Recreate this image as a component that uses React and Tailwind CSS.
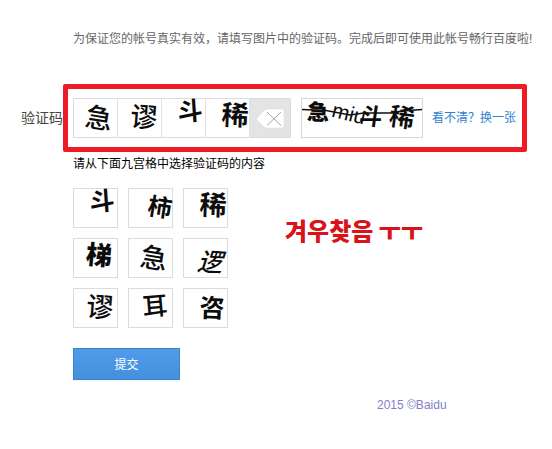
import { useState } from 'react'

const GLYPHS = {
    dou: { char: '斗', x: 28, y: 12, size: 25, rotate: -4, weight: 700 },
    shi: { char: '柿', x: 31, y: 18, size: 24, rotate: 9, weight: 700 },
    xi: { char: '稀', x: 29, y: 16, size: 27, rotate: 2, weight: 700 },
    ti: { char: '梯', x: 25, y: 16, size: 26, rotate: 5, weight: 900 },
    ji: { char: '急', x: 25, y: 19, size: 27, rotate: 9, weight: 500 },
    luo: { char: '逻', x: 26, y: 23, size: 25, rotate: 4, weight: 500, italic: true },
    miu: { char: '谬', x: 26, y: 18, size: 27, rotate: 4, weight: 500 },
    er: { char: '耳', x: 26, y: 17, size: 25, rotate: -5, weight: 500 },
    zi: { char: '咨', x: 28, y: 19, size: 25, rotate: 2, weight: 700 },
}

const GRID = ['dou', 'shi', 'xi', 'ti', 'ji', 'luo', 'miu', 'er', 'zi']

const CAPTCHA = [
    { char: '急', x: 16, y: 13, size: 22, rotate: 2, weight: 900 },
    { char: 'miu', x: 47, y: 14, size: 21, rotate: 14, weight: 400 },
    { char: '斗', x: 69, y: 17, size: 23, rotate: 8, weight: 700 },
    { char: '稀', x: 100, y: 18, size: 25, rotate: 8, weight: 700 },
]

function Glyph({ char, x, y, size, rotate, weight, italic }) {
    return (
        <text
            x={x}
            y={y}
            dy="0.37em"
            textAnchor="middle"
            fontSize={size}
            fontWeight={weight}
            fontStyle={italic ? 'italic' : 'normal'}
            transform={`rotate(${rotate} ${x} ${y})`}
            fill="#0c0c0c"
        >
            {char}
        </text>
    )
}

function Tile({ id }) {
    return (
        <svg className="block h-[38px] w-[43px] overflow-visible" viewBox="0 0 43 38">
            <Glyph {...GLYPHS[id]} />
        </svg>
    )
}

function CodeBox({ picked, onDelete }) {
    return (
        <div role="group" aria-labelledby="code-label" className="flex h-10 border border-[#dcdcdc]">
            {[0, 1, 2, 3].map((i) => (
                <div key={i} className="w-11 border-r border-[#e2e2e2]">
                    {picked[i] && <Tile id={picked[i]} />}
                </div>
            ))}
            <button type="button" aria-label="删除" onClick={onDelete} className="w-10 bg-[#e4e4e4]">
                <svg className="block h-[38px] w-10" viewBox="0 0 40 38">
                    <path d="M6 20 14 11.500Q15 10 17 10H32Q34 10 34 12V27Q34 29 32 29H17Q15 29 14 28Z" fill="#fff" stroke="#d8d8d8" strokeWidth="0.500" />
                    <path d="M17 13 31 26.500M31 13 17 26.500" stroke="#a3a3a3" fill="none" />
                </svg>
            </button>
        </div>
    )
}

export default function App() {
    const [picked, setPicked] = useState(['ji', 'miu', 'dou', 'xi'])

    const pick = (id) => setPicked((prev) => (prev.length < 4 ? [...prev, id] : prev))
    const removeLast = () => setPicked((prev) => prev.slice(0, -1))

    return (
        <main className="bg-white pt-[31px] pb-9 font-['Liberation_Sans','Noto_Sans_CJK_SC',sans-serif] text-xs leading-4">
            <form onSubmit={(e) => e.preventDefault()}>
                <p className="pl-[73px] whitespace-nowrap text-[#666]">
                    为保证您的帐号真实有效，请填写图片中的验证码。完成后即可使用此帐号畅行百度啦!
                </p>

                <div className="mt-[37px] flex items-center pl-[21px]">
                    <span id="code-label" className="w-[42px] shrink-0 text-sm text-[#444]">验证码</span>
                    <div className="flex shrink-0 items-center rounded-xs border-5 border-[#ed1c24] py-[9px] pr-[6px] pl-[5px]">
                        <CodeBox picked={picked} onDelete={removeLast} />
                        <div className="ml-[10px] border border-[#d6d6d6]">
                            <svg className="block h-[38px] w-[120px] overflow-visible" viewBox="0 0 120 38">
                                {CAPTCHA.map((g) => <Glyph key={g.char} {...g} />)}
                                <path d="M0 10.500 24 11.500 48 16 62 14H88L100 12 120 10.500" stroke="#111" strokeWidth="1.300" fill="none" />
                            </svg>
                        </div>
                        <a href="#" className="ml-[9px] text-[#2f82d0]">看不清？换一张</a>
                    </div>
                </div>

                <div className="pl-[73px]">
                    <p className="mt-1 text-black">请从下面九宫格中选择验证码的内容</p>

                    <div className="mt-4 flex items-start">
                        <div className="grid grid-cols-3 gap-[10px]">
                            {GRID.map((id) => (
                                <button key={id} type="button" onClick={() => pick(id)} className="border border-[#dcdcdc] bg-white">
                                    <Tile id={id} />
                                </button>
                            ))}
                        </div>
                        <p className="mt-[30px] ml-[57px] font-['Noto_Sans_CJK_KR',sans-serif] text-2xl leading-6 font-black whitespace-nowrap text-[#d9131a]">
                            겨우찾음 ㅜㅜ
                        </p>
                    </div>

                    <button type="submit" className="mt-5 h-8 w-[107px] border border-[#3c84cc] bg-linear-to-b from-[#4f9cea] to-[#4590dc] pt-px text-white shadow-xs">
                        提交
                    </button>
                </div>
            </form>

            <footer className="mt-[17px] pl-[377px] text-[#7f7fc4]">2015 ©Baidu</footer>
        </main>
    )
}
